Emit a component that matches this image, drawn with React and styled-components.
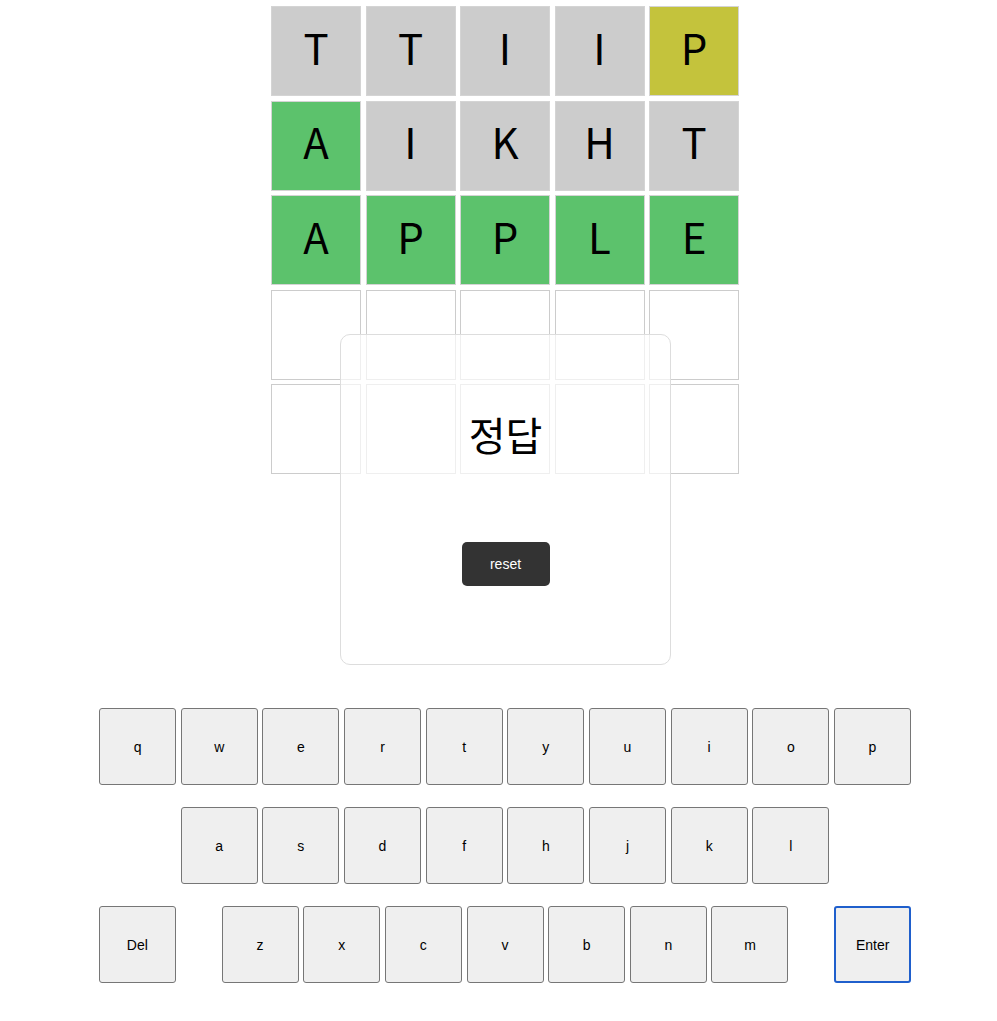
import React from 'react'
import styled, { createGlobalStyle } from 'styled-components'

const GlobalStyle = createGlobalStyle`
  body {
    margin: 0;
    background: #fff;
    font-family: 'Liberation Sans', Arial, sans-serif;
  }
`

const guesses = [
  [['T', 'gray'], ['T', 'gray'], ['I', 'gray'], ['I', 'gray'], ['P', 'yellow']],
  [['A', 'green'], ['I', 'gray'], ['K', 'gray'], ['H', 'gray'], ['T', 'gray']],
  [['A', 'green'], ['P', 'green'], ['P', 'green'], ['L', 'green'], ['E', 'green']],
  [['', 'empty'], ['', 'empty'], ['', 'empty'], ['', 'empty'], ['', 'empty']],
  [['', 'empty'], ['', 'empty'], ['', 'empty'], ['', 'empty'], ['', 'empty']],
]

const colors = {
  gray: '#cccccc',
  yellow: '#c4c33c',
  green: '#5cc26c',
  empty: '#ffffff',
}

// the second row has no "g" key in the original
const rows = ['qwertyuiop', 'asdfhjkl', 'zxcvbnm']

const App = () => {
  return (
    <Page>
      <GlobalStyle />
      <Board>
        <Grid>
          {guesses.flat().map(([letter, state], i) => (
            <Tile key={i} $state={state}>
              {letter}
            </Tile>
          ))}
        </Grid>
        <Modal>
          <Title>정답</Title>
          <ResetButton>reset</ResetButton>
        </Modal>
      </Board>
      <Keyboard>
        <KeyRow>
          {rows[0].split('').map((k) => (
            <Key key={k}>{k}</Key>
          ))}
        </KeyRow>
        <KeyRow>
          {rows[1].split('').map((k) => (
            <Key key={k}>{k}</Key>
          ))}
        </KeyRow>
        <KeyRow>
          <Key $wide>Del</Key>
          {rows[2].split('').map((k) => (
            <Key key={k}>{k}</Key>
          ))}
          <Key $wide $focused>
            Enter
          </Key>
        </KeyRow>
      </Keyboard>
    </Page>
  )
}

const Page = styled.main`
  padding: 6px 0 0 13px;
  display: flex;
  flex-direction: column;
  align-items: center;
`

const Board = styled.section`
  position: relative;
  width: 468px;
  height: 468px;
`

const Grid = styled.div`
  display: grid;
  grid-template-columns: repeat(5, 90px);
  grid-auto-rows: 90px;
  gap: 4.5px;
`

const Tile = styled.div`
  box-sizing: border-box;
  border: 1px solid ${(p) => (p.$state === 'empty' ? '#cccccc' : '#d4d4d4')};
  background: ${(p) => colors[p.$state]};
  display: flex;
  align-items: center;
  justify-content: center;
  font-family: 'Noto Sans CJK KR', 'Noto Sans', sans-serif;
  font-size: 42px;
  color: #000;
  padding-bottom: 10px;
`

const Modal = styled.div`
  position: absolute;
  left: 69px;
  top: 328px;
  width: 331px;
  height: 331px;
  box-sizing: border-box;
  border: 1px solid #dddddd;
  border-radius: 10px;
  background: rgba(255, 255, 255, 0.68);
  display: flex;
  flex-direction: column;
  align-items: center;
`

const Title = styled.h2`
  margin: 73px 0 0;
  font-family: 'Noto Sans CJK KR', 'Noto Sans', sans-serif;
  font-weight: 400;
  font-size: 40px;
  line-height: 52px;
  color: #000;
`

const ResetButton = styled.button`
  margin-top: 82px;
  width: 88px;
  height: 44px;
  border: none;
  border-radius: 5px;
  background: #333333;
  color: #fff;
  font-family: 'Liberation Sans', Arial, sans-serif;
  font-size: 14px;
  font-weight: 500;
`

const Keyboard = styled.section`
  margin-top: 234px;
  display: flex;
  flex-direction: column;
  gap: 22px;
`

const KeyRow = styled.div`
  display: flex;
  justify-content: center;
  gap: 4.67px;
`

const Key = styled.button`
  box-sizing: border-box;
  width: 77px;
  height: 77px;
  margin: ${(p) => (p.$wide ? '0 41px' : '0')};
  &:first-child {
    margin-left: 0;
  }
  &:last-child {
    margin-right: 0;
  }
  background: #efefef;
  border: ${(p) => (p.$focused ? '2px solid #1f5fcc' : '1px solid #767676')};
  border-radius: 3px;
  font-family: 'Liberation Sans', Arial, sans-serif;
  font-size: 14px;
  color: #000;
  padding: 0;
`

export default App
